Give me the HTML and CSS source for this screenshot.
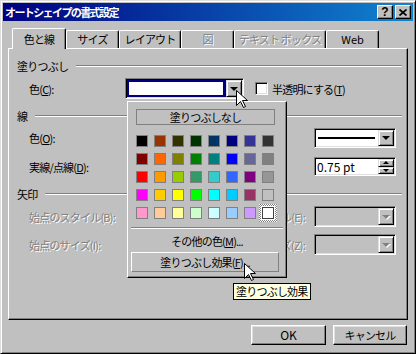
FILE: index.html
```html
<!DOCTYPE html>
<html lang="ja">
<head>
<meta charset="utf-8">
<title>オートシェイプの書式設定</title>
<link rel="stylesheet" href="styles.css">
</head>
<body>
<div class="dialog">
    <div class="titlebar">
        <span class="title-text">オートシェイプの書式設定</span>
        <div class="title-buttons">
            <div class="tb-btn tb-help">?</div>
            <div class="tb-btn">
                <svg width="8" height="7" viewBox="0 0 8 7"><path d="M0.5 0.5 L7.5 6.5 M7.5 0.5 L0.5 6.5" stroke="#000" stroke-width="1.7"/></svg>
            </div>
        </div>
    </div>

    <div class="tabs">
        <div class="tab active" style="width:54px">色と線</div>
        <div class="tab" style="width:53px">サイズ</div>
        <div class="tab" style="width:62px">レイアウト</div>
        <div class="tab disabled" style="width:53px">図</div>
        <div class="tab disabled" style="width:92px">テキスト ボックス</div>
        <div class="tab latin" style="width:53px">Web</div>
    </div>

    <div class="panel">
        <div class="section"><span>塗りつぶし</span><div class="etch"></div></div>
        <div class="row row-fill">
            <span class="lbl-fill">色(<u>C</u>):</span>
            <div class="combo combo-fill">
                <div class="fill-field"><div class="fill-swatch"></div></div>
                <div class="drop"><span class="arrow"></span></div>
            </div>
            <div class="checkbox"></div>
            <span class="check-label">半透明にする(<u>T</u>)</span>
        </div>

        <div class="section sec-line"><span>線</span><div class="etch"></div></div>
        <div class="row row-linecolor">
            <span class="lbl">色(<u>O</u>):</span>
            <span class="lbl-right left">スタイル(<u>S</u>):</span>
            <div class="combo">
                <div class="line-field"><div class="line-sample"></div></div>
                <div class="drop"><span class="arrow"></span></div>
            </div>
        </div>
        <div class="row row-dash">
            <span class="lbl">実線/点線(<u>D</u>):</span>
            <span class="lbl-right left">太さ(<u>W</u>):</span>
            <div class="combo spinbox">
                <div class="spin-text">0.75 pt</div>
                <div class="spin">
                    <div class="spin-btn"><span class="arrow up small"></span></div>
                    <div class="spin-btn"><span class="arrow small"></span></div>
                </div>
            </div>
        </div>

        <div class="section sec-arrow"><span>矢印</span><div class="etch"></div></div>
        <div class="row row-begin disabled">
            <span class="lbl">始点のスタイル(B):</span>
            <span class="lbl-right"><span>終点のスタイル(E):</span></span>
            <div class="combo off">
                <div class="off-field"></div>
                <div class="drop"><span class="arrow gray"></span></div>
            </div>
        </div>
        <div class="row row-size disabled">
            <span class="lbl">始点のサイズ(I):</span>
            <span class="lbl-right"><span>終点のサイズ(Z):</span></span>
            <div class="combo off">
                <div class="off-field"></div>
                <div class="drop"><span class="arrow gray"></span></div>
            </div>
        </div>
    </div>

    <div class="buttons">
        <div class="btn btn-ok latin">OK</div>
        <div class="btn btn-cancel">キャンセル</div>
    </div>

    <!-- color picker dropped down from the fill combo -->
    <div class="popup">
        <div class="none-btn">塗りつぶしなし</div>
        <div class="palette">
            <div class="swatch" style="background:#000000"></div>
            <div class="swatch" style="background:#993300"></div>
            <div class="swatch" style="background:#333300"></div>
            <div class="swatch" style="background:#003300"></div>
            <div class="swatch" style="background:#003366"></div>
            <div class="swatch" style="background:#000080"></div>
            <div class="swatch" style="background:#333399"></div>
            <div class="swatch" style="background:#333333"></div>

            <div class="swatch" style="background:#800000"></div>
            <div class="swatch" style="background:#ff6600"></div>
            <div class="swatch" style="background:#808000"></div>
            <div class="swatch" style="background:#008000"></div>
            <div class="swatch" style="background:#008080"></div>
            <div class="swatch" style="background:#0000ff"></div>
            <div class="swatch" style="background:#666699"></div>
            <div class="swatch" style="background:#808080"></div>

            <div class="swatch" style="background:#ff0000"></div>
            <div class="swatch" style="background:#ff9900"></div>
            <div class="swatch" style="background:#99cc00"></div>
            <div class="swatch" style="background:#339966"></div>
            <div class="swatch" style="background:#33cccc"></div>
            <div class="swatch" style="background:#3366ff"></div>
            <div class="swatch" style="background:#800080"></div>
            <div class="swatch" style="background:#969696"></div>

            <div class="swatch" style="background:#ff00ff"></div>
            <div class="swatch" style="background:#ffcc00"></div>
            <div class="swatch" style="background:#ffff00"></div>
            <div class="swatch" style="background:#00ff00"></div>
            <div class="swatch" style="background:#00ffff"></div>
            <div class="swatch" style="background:#00ccff"></div>
            <div class="swatch" style="background:#993366"></div>
            <div class="swatch" style="background:#c0c0c0"></div>

            <div class="swatch" style="background:#ff99cc"></div>
            <div class="swatch" style="background:#ffcc99"></div>
            <div class="swatch" style="background:#ffff99"></div>
            <div class="swatch" style="background:#ccffcc"></div>
            <div class="swatch" style="background:#ccffff"></div>
            <div class="swatch" style="background:#99ccff"></div>
            <div class="swatch" style="background:#cc99ff"></div>
            <div class="swatch selected" style="background:#ffffff"></div>
        </div>
        <div class="popup-sep"></div>
        <div class="more">その他の色(<u>M</u>)...</div>
        <div class="effects-btn">塗りつぶし効果(<u>F</u>)...</div>
    </div>

    <div class="tooltip">塗りつぶし効果</div>

    <svg class="cursor cursor-a" width="12" height="19" viewBox="0 0 12 19"><path d="M0.5 0.5 L0.5 15.5 L4.5 11.5 L7.5 17.5 L9.5 16.5 L6.5 10.5 L11.5 10.5 Z" fill="#fff" stroke="#000" stroke-width="1" stroke-linejoin="miter"/></svg>
    <svg class="cursor cursor-b" width="12" height="19" viewBox="0 0 12 19"><path d="M0.5 0.5 L0.5 15.5 L4.5 11.5 L7.5 17.5 L9.5 16.5 L6.5 10.5 L11.5 10.5 Z" fill="#fff" stroke="#000" stroke-width="1" stroke-linejoin="miter"/></svg>
</div>
</body>
</html>
```

FILE: styles.css
```css
* {
    box-sizing: border-box;
}

body {
    margin: 0;
    background: #c0c0c0;
    font-family: "Noto Sans CJK JP", "Noto Sans CJK SC", sans-serif;
    font-size: 11px;
    line-height: 16px;
    letter-spacing: -0.8px;
    color: #000;
}

.latin {
    letter-spacing: 0;
}

u {
    text-decoration-thickness: 1px;
    text-underline-offset: 1px;
}

.dialog {
    position: relative;
    width: 416px;
    height: 354px;
    padding: 2px;
    border: 1px solid;
    border-color: #dfdfdf #000 #000 #dfdfdf;
    box-shadow: inset 1px 1px #fff, inset -1px -1px #808080;
    display: flex;
    flex-direction: column;
}

/* title bar */
.titlebar {
    height: 18px;
    display: flex;
    align-items: center;
    padding: 0 2px 0 2px;
    background: linear-gradient(90deg, #000080, #1084d0);
    color: #fff;
    font-weight: bold;
    letter-spacing: -1.6px;
}

.title-buttons {
    margin-left: auto;
    display: flex;
    gap: 2px;
}

.tb-btn {
    width: 16px;
    height: 14px;
    display: flex;
    align-items: center;
    justify-content: center;
    background: #c0c0c0;
    border: 1px solid;
    border-color: #fff #000 #000 #fff;
    box-shadow: inset -1px -1px #808080;
    color: #000;
}

.tb-help {
    font-family: "Liberation Sans", sans-serif;
    font-size: 12px;
    font-weight: bold;
    line-height: 12px;
    letter-spacing: 0;
}

/* tabs */
.tabs {
    margin-top: 7px;
    height: 20px;
    padding-left: 9px;
    display: flex;
    align-items: flex-end;
    position: relative;
    z-index: 2;
}

.tab {
    height: 18px;
    border-top: 1px solid #fff;
    border-left: 1px solid #fff;
    border-right: 1px solid #000;
    box-shadow: inset -1px 0 #808080;
    border-radius: 2px 2px 0 0;
    background: #c0c0c0;
    text-align: center;
    line-height: 17px;
    white-space: nowrap;
}

.tab.active {
    height: 21px;
    margin-bottom: -1px;
    line-height: 20px;
}

.tab.disabled,
.disabled {
    color: #808080;
    text-shadow: 1px 1px 0 #fff;
}

/* main panel */
.panel {
    margin-left: 5px;
    width: 400px;
    height: 272px;
    border: 1px solid;
    border-color: #fff #000 #000 #fff;
    box-shadow: inset -1px -1px #808080;
    padding: 9px 5px 0 0;
    display: flex;
    flex-direction: column;
}

.section {
    height: 16px;
    display: flex;
    align-items: center;
    padding-left: 8px;
}

.etch {
    flex: 1;
    height: 2px;
    margin-left: 8px;
    border-top: 1px solid #808080;
    border-bottom: 1px solid #fff;
}

.sec-line {
    margin-top: 9px;
}

.sec-arrow {
    margin-top: 10px;
}

.row {
    display: flex;
    align-items: center;
    padding-left: 20px;
}

.row-fill {
    margin-top: 4px;
    height: 21px;
}

.row-linecolor {
    margin-top: 4px;
    height: 20px;
}

.row-dash {
    margin-top: 9px;
    height: 19px;
}

.row-begin {
    margin-top: 4px;
    height: 21px;
}

.row-size {
    margin-top: 7px;
    height: 21px;
}

.lbl-fill {
    width: 96px;
}

.lbl {
    width: 190px;
}

.lbl-right {
    width: 95px;
    padding-right: 9px;
    display: flex;
    justify-content: flex-end;
    white-space: nowrap;
}

.lbl-right.left {
    justify-content: flex-start;
}

/* combo boxes */
.combo {
    width: 82px;
    height: 100%;
    display: flex;
    background: #fff;
    border: 1px solid;
    border-color: #808080 #fff #fff #808080;
    box-shadow: inset 1px 1px #000, inset -1px -1px #dfdfdf;
    padding: 1px;
}

.combo-fill {
    width: 119px;
}

.fill-field {
    flex: 1;
    background: #000080;
    padding: 2px 3px 2px 2px;
    display: flex;
}

.fill-swatch {
    flex: 1;
    background: #fff;
}

.line-field {
    flex: 1;
    display: flex;
    align-items: center;
    padding: 0 2px;
}

.line-sample {
    flex: 1;
    height: 2px;
    background: #000;
    margin-right: 1px;
}

.drop {
    width: 16px;
    display: flex;
    align-items: center;
    justify-content: center;
    background: #c0c0c0;
    border: 1px solid;
    border-color: #dfdfdf #000 #000 #dfdfdf;
    box-shadow: inset 1px 1px #fff, inset -1px -1px #808080;
}

.arrow {
    width: 0;
    height: 0;
    border-style: solid;
    border-width: 4px 4px 0;
    border-color: #000 transparent transparent;
}

.arrow.small {
    border-width: 3px 3px 0;
}

.arrow.up {
    border-width: 0 3px 3px;
    border-color: transparent transparent #000;
}

.arrow.gray {
    border-color: #808080 transparent transparent;
    filter: drop-shadow(1px 1px 0 #fff);
}

.combo.off {
    background: #c0c0c0;
}

.off-field {
    flex: 1;
}

.spin-text {
    flex: 1;
    padding-left: 1px;
    line-height: 15px;
    font-size: 12px;
    letter-spacing: 0;
}

.spin {
    width: 16px;
    display: flex;
    flex-direction: column;
}

.spin-btn {
    flex: 1;
    display: flex;
    align-items: center;
    justify-content: center;
    background: #c0c0c0;
    border: 1px solid;
    border-color: #dfdfdf #000 #000 #dfdfdf;
    box-shadow: inset 1px 1px #fff, inset -1px -1px #808080;
}

.checkbox {
    width: 13px;
    height: 13px;
    margin-left: 11px;
    background: #fff;
    border: 1px solid;
    border-color: #808080 #fff #fff #808080;
    box-shadow: inset 1px 1px #000, inset -1px -1px #dfdfdf;
}

.check-label {
    margin-left: 4px;
}

/* OK / cancel */
.buttons {
    margin-top: 5px;
    padding-right: 6px;
    display: flex;
    justify-content: flex-end;
    gap: 7px;
}

.btn {
    height: 20px;
    display: flex;
    align-items: center;
    justify-content: center;
    border: 1px solid;
    border-color: #fff #000 #000 #fff;
    box-shadow: inset -1px -1px #808080, inset 1px 1px #dfdfdf;
}

.btn-ok {
    width: 75px;
    font-size: 12px;
}

.btn-cancel {
    width: 74px;
}

/* palette popup */
.popup {
    position: absolute;
    left: 126px;
    top: 100px;
    width: 160px;
    height: 177px;
    z-index: 5;
    background: #c0c0c0;
    border: 1px solid;
    border-color: #fff #000 #000 #fff;
    box-shadow: inset -1px -1px #808080;
    padding-top: 7px;
    display: flex;
    flex-direction: column;
}

.none-btn {
    margin-left: 8px;
    width: 139px;
    height: 16px;
    border: 1px solid #808080;
    text-align: center;
    line-height: 14px;
}

.palette {
    position: relative;
    z-index: 0;
    margin-top: 10px;
    margin-left: 8px;
    display: grid;
    grid-template-columns: repeat(8, 12px);
    grid-auto-rows: 12px;
    gap: 6px;
}

.swatch {
    border: 1px solid #808080;
    position: relative;
}

.swatch.selected {
    border-color: #404040;
    box-shadow: 0 0 0 1px #fff;
}

.swatch.selected::before {
    content: "";
    position: absolute;
    inset: -4px;
    z-index: -1;
    background: repeating-conic-gradient(#808080 0 25%, #fff 0 50%) 0 0 / 2px 2px;
}

.popup-sep {
    margin-top: 8px;
    margin-left: 3px;
    width: 152px;
    height: 2px;
    border-top: 1px solid #808080;
    border-bottom: 1px solid #fff;
}

.more {
    margin-top: 4px;
    height: 16px;
    text-align: center;
}

.effects-btn {
    margin-top: 3px;
    margin-left: 3px;
    width: 148px;
    height: 20px;
    border: 1px solid;
    border-color: #fff #808080 #808080 #fff;
    text-align: center;
    line-height: 18px;
}

.tooltip {
    position: absolute;
    left: 232px;
    top: 282px;
    width: 78px;
    height: 17px;
    z-index: 6;
    background: #ffffe1;
    border: 1px solid #000;
    padding-left: 2px;
    line-height: 15px;
    white-space: nowrap;
}

.cursor {
    position: absolute;
    z-index: 7;
}

.cursor-a {
    left: 235px;
    top: 89px;
}

.cursor-b {
    left: 243px;
    top: 262px;
}
```
